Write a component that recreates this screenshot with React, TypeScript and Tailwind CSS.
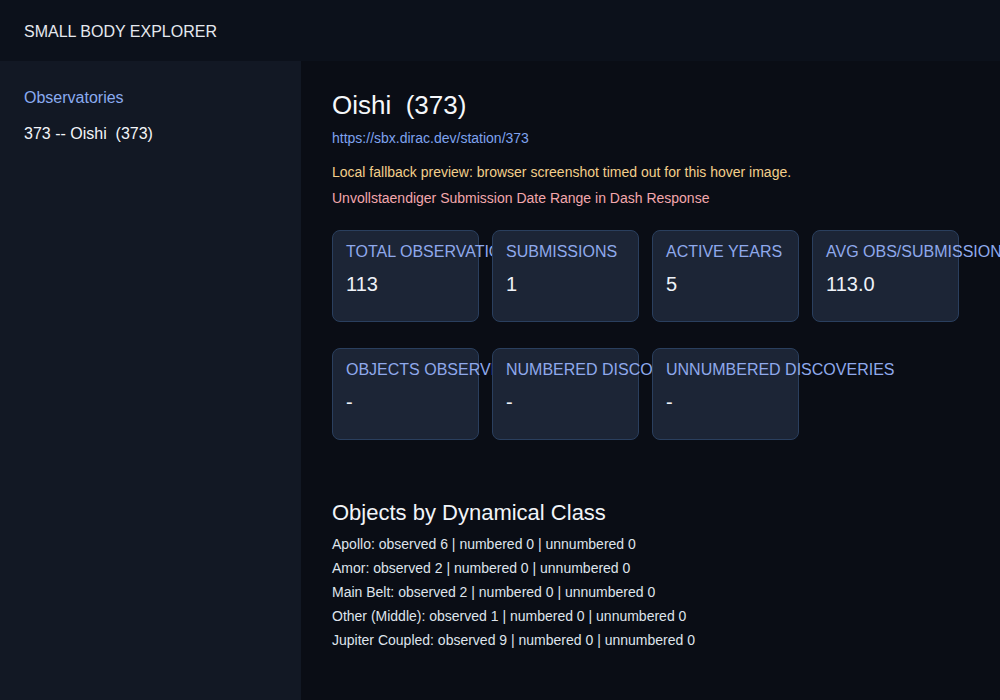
import React from "react";

const font = { fontFamily: '"Liberation Sans", Arial, sans-serif' };

function Card({ label, value }: { label: string; value: string }) {
  return (
    <div className="w-[147px] h-[92px] shrink-0 rounded-[8px] border border-[#2a3f5e] bg-[#1c2536] px-[13px] pt-[9px] box-border">
      <div className="text-[16px] leading-[24px] text-[#8fa9ec] whitespace-nowrap">{label}</div>
      <div className="mt-[6px] text-[20px] leading-[28px] text-[#eef2f8]">{value}</div>
    </div>
  );
}

const row1 = [
  { label: "TOTAL OBSERVATIONS", value: "113" },
  { label: "SUBMISSIONS", value: "1" },
  { label: "ACTIVE YEARS", value: "5" },
  { label: "AVG OBS/SUBMISSION", value: "113.0" },
];
const row2 = [
  { label: "OBJECTS OBSERVED", value: "-" },
  { label: "NUMBERED DISCOVERIES", value: "-" },
  { label: "UNNUMBERED DISCOVERIES", value: "-" },
];

const classes = [
  "Apollo: observed 6 | numbered 0 | unnumbered 0",
  "Amor: observed 2 | numbered 0 | unnumbered 0",
  "Main Belt: observed 2 | numbered 0 | unnumbered 0",
  "Other (Middle): observed 1 | numbered 0 | unnumbered 0",
  "Jupiter Coupled: observed 9 | numbered 0 | unnumbered 0",
];

export default function App() {
  return (
    <div style={font} className="w-[1000px] h-[700px] flex flex-col bg-[#0a0d15] overflow-hidden">
      <header className="h-[61px] shrink-0 bg-[#0c111b] flex items-center px-[24px] pt-[2px]">
        <span className="text-[16px] text-[#e6e9ef]">SMALL BODY EXPLORER</span>
      </header>
      <div className="flex flex-1 min-h-0">
        <aside className="w-[301px] shrink-0 bg-[#121824] px-[24px] pt-[25px]">
          <div className="text-[16px] leading-[24px] text-[#8aabf0]">Observatories</div>
          <div className="mt-[12px] text-[16px] leading-[24px] text-[#f3f5f9] whitespace-pre">373 -- Oishi  (373)</div>
        </aside>
        <main className="flex-1 pl-[31px] pt-[28px]">
          <h1 className="text-[26px] leading-[32px] text-[#f5f7fa] whitespace-pre">Oishi  (373)</h1>
          <div className="mt-[7px] text-[14px] leading-[20px] text-[#7fa3ef]">https://sbx.dirac.dev/station/373</div>
          <div className="mt-[14px] text-[14px] leading-[20px] text-[#f3cf8b]">
            Local fallback preview: browser screenshot timed out for this hover image.
          </div>
          <div className="mt-[6px] text-[14px] leading-[20px] text-[#f3a7ad]">
            Unvollstaendiger Submission Date Range in Dash Response
          </div>
          <div className="mt-[22px] flex gap-[13px]">
            {row1.map((c) => (
              <Card key={c.label} {...c} />
            ))}
          </div>
          <div className="mt-[26px] flex gap-[13px]">
            {row2.map((c) => (
              <Card key={c.label} {...c} />
            ))}
          </div>
          <h2 className="mt-[59px] text-[22px] leading-[28px] text-[#f2f4f8]">Objects by Dynamical Class</h2>
          <div className="mt-[5px]">
            {classes.map((t) => (
              <div key={t} className="text-[14px] leading-[24px] text-[#dfe4ec]">
                {t}
              </div>
            ))}
          </div>
        </main>
      </div>
    </div>
  );
}
